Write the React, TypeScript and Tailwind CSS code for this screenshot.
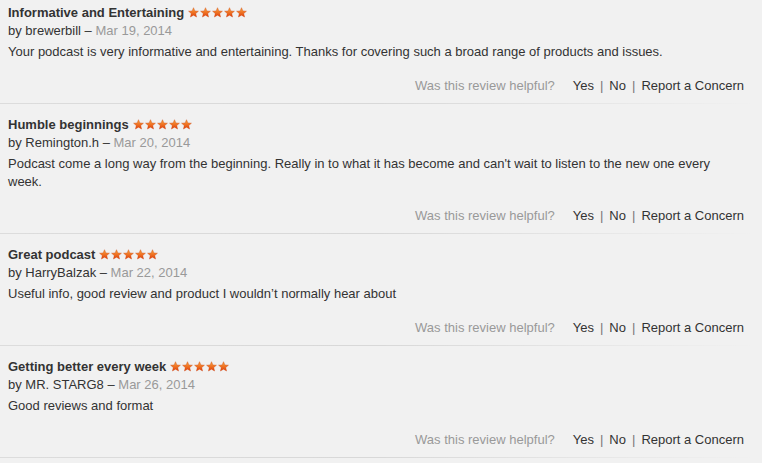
const reviews = [
  {
    title: "Informative and Entertaining",
    author: "brewerbill",
    date: "Mar 19, 2014",
    body: "Your podcast is very informative and entertaining. Thanks for covering such a broad range of products and issues.",
  },
  {
    title: "Humble beginnings",
    author: "Remington.h",
    date: "Mar 20, 2014",
    body: "Podcast come a long way from the beginning. Really in to what it has become and can't wait to listen to the new one every week.",
  },
  {
    title: "Great podcast",
    author: "HarryBalzak",
    date: "Mar 22, 2014",
    body: "Useful info, good review and product I wouldn\u2019t normally hear about",
  },
  {
    title: "Getting better every week",
    author: "MR. STARG8",
    date: "Mar 26, 2014",
    body: "Good reviews and format",
  },
];

function Star() {
  return (
    <svg width="11" height="11" viewBox="0 0 24 24" className="mr-[1px]">
      <defs>
        <linearGradient id="starGrad" x1="0" y1="0" x2="0" y2="1">
          <stop offset="0%" stopColor="#fba43c" />
          <stop offset="100%" stopColor="#e2420c" />
        </linearGradient>
      </defs>
      <path
        d="M12 1.5l3.1 7.1 7.7.6-5.9 5.1 1.8 7.6L12 17.8l-6.7 4.1 1.8-7.6-5.9-5.1 7.7-.6z"
        fill="url(#starGrad)"
        stroke="#c9400c"
        strokeWidth="0.8"
      />
    </svg>
  );
}

function Stars() {
  return (
    <span className="ml-[4px] inline-flex items-center translate-y-[-1px]">
      {[0, 1, 2, 3, 4].map((i) => (
        <Star key={i} />
      ))}
    </span>
  );
}

export default function App() {
  return (
    <div
      className="w-[762px] h-[463px] overflow-hidden bg-[#f1f1f1] text-[13px] text-[#333] leading-[18px]"
      style={{ fontFamily: '"Helvetica Neue", "Liberation Sans", Arial, sans-serif' }}
    >
      {reviews.map((r) => (
        <div key={r.title}>
          <div className="pl-[8px] pr-[18px] pt-[4px]">
            <div className="flex items-center font-bold h-[18px]">
              {r.title}
              <Stars />
            </div>
            <div className="h-[17px] leading-[17px]">
              by {r.author} – <span className="text-[#999]">{r.date}</span>
            </div>
            <div className="mt-[4px] pr-[20px]">{r.body}</div>
            <div className="mt-[16px] flex justify-end items-center h-[18px]">
              <span className="text-[#999] mr-[18px]">Was this review helpful?</span>
              <span>Yes</span>
              <span className="text-[#777] mx-[6px]">|</span>
              <span>No</span>
              <span className="text-[#777] mx-[6px]">|</span>
              <span>Report a Concern</span>
            </div>
          </div>
          <div className="mt-[8px] mb-[8px] h-px bg-gradient-to-r from-[#dcdcdc] via-[#d8d8d8] to-transparent w-[756px]" />
        </div>
      ))}
    </div>
  );
}
